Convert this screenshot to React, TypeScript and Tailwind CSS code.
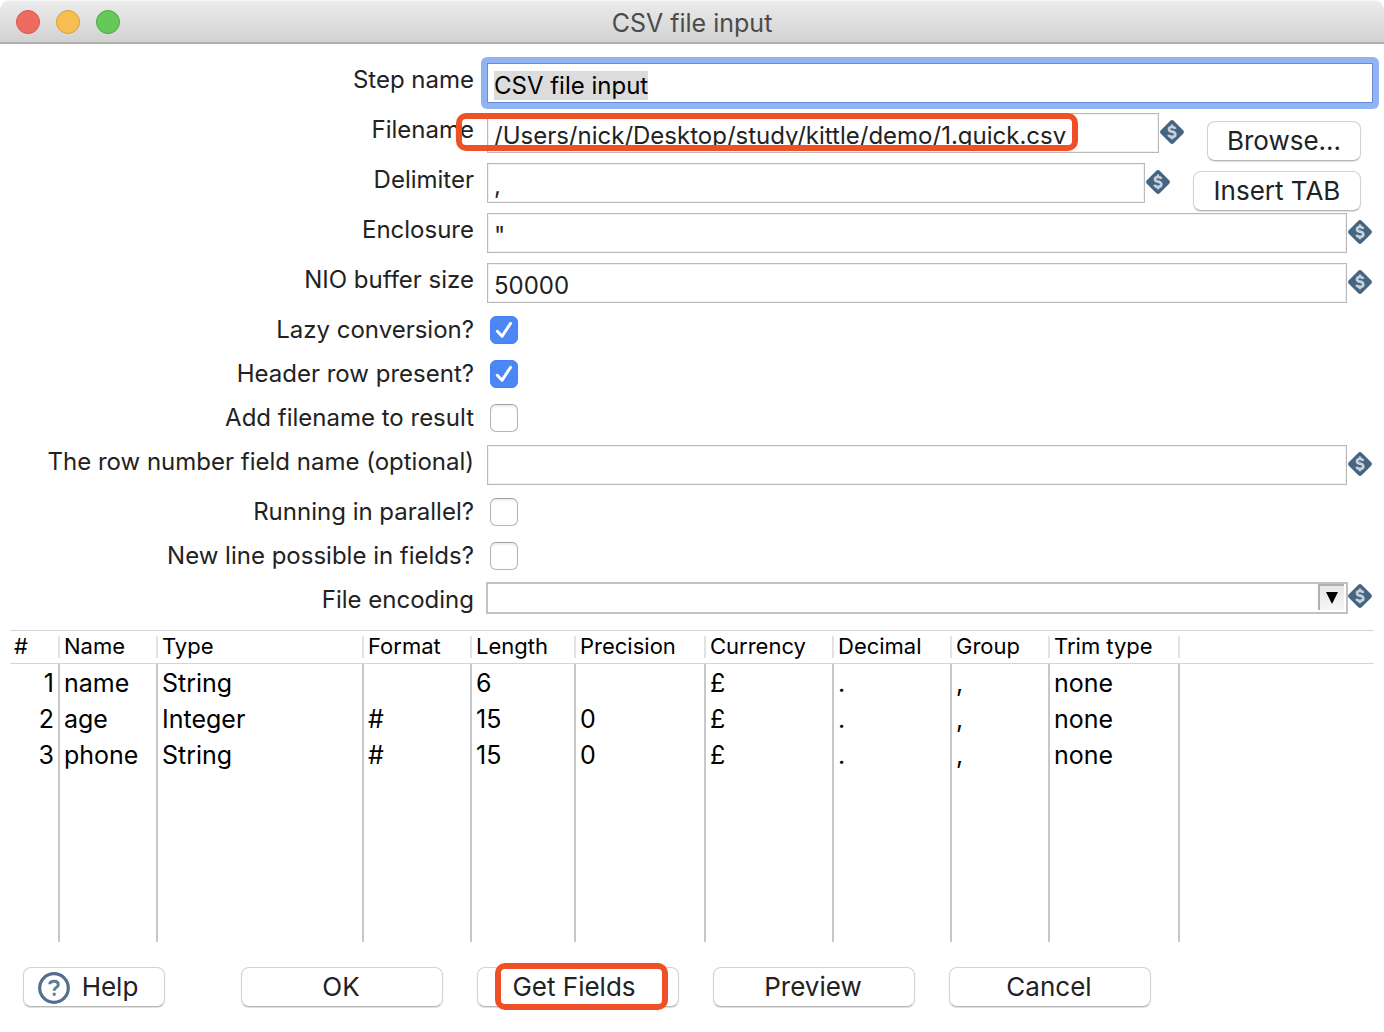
import { useEffect, useRef } from 'react';
import type { ReactNode } from 'react';

const fieldClass =
  'block h-10 min-w-0 flex-1 rounded-none border border-[#b9b9b9] bg-white px-1.5 pt-1 text-2xl text-[#222] shadow-[inset_0_0_0_1px_#f1f1f1] outline-none';

function VariableIcon() {
  return (
    <svg viewBox="0 0 24 24" className="size-6 shrink-0" aria-hidden="true">
      <path d="M10.3 0.8 Q12 -0.6 13.7 0.8 L23.2 10.3 Q24.6 12 23.2 13.7 L13.7 23.2 Q12 24.6 10.3 23.2 L0.8 13.7 Q-0.6 12 0.8 10.3 Z" fill="#456583" />
      <path d="M15.2 8.9 Q14.8 7 12 7 Q9 7 9 9.2 Q9 11.1 12 11.6 Q15.3 12.2 15.3 14.4 Q15.3 16.8 12 16.8 Q9 16.8 8.6 14.8" fill="none" stroke="#c6d1db" strokeWidth="2.7" />
      <path d="M12 4.6 V7 M12 16.8 V19.2" fill="none" stroke="#c6d1db" strokeWidth="2.4" />
    </svg>
  );
}

function Row({ label, id, tall, children }: { label: string; id: string; tall?: boolean; children: ReactNode }) {
  return (
    <div className={tall ? 'flex h-[50px] items-center' : 'flex h-11 items-center'}>
      <label htmlFor={id} className={tall ? 'w-[474px] shrink-0 pb-1.5 text-right' : 'w-[474px] shrink-0 text-right'}>
        {label}
      </label>
      {children}
    </div>
  );
}

function Check({ id, checked }: { id: string; checked?: boolean }) {
  return (
    <span className="ml-4 grid size-7">
      <input
        id={id}
        type="checkbox"
        defaultChecked={checked}
        className="peer col-start-1 row-start-1 size-7 appearance-none rounded-md border border-[#b5b5b5] border-t-[#a0a0a0] bg-white shadow-[inset_0_2px_2px_#eeeeee] checked:border-[#4583f2] checked:bg-[#4b88f6] checked:shadow-none"
      />
      <svg viewBox="0 0 28 28" className="pointer-events-none col-start-1 row-start-1 hidden size-7 peer-checked:block" aria-hidden="true">
        <path d="M7.3 16.3 L12 21.3 L20.6 8.4" fill="none" stroke="#356fd0" strokeOpacity="0.5" strokeWidth="3" strokeLinecap="round" strokeLinejoin="round" />
        <path d="M7.3 15.3 L12 20.3 L20.6 7.4" fill="none" stroke="white" strokeWidth="3" strokeLinecap="round" strokeLinejoin="round" />
      </svg>
    </span>
  );
}

const buttonClass =
  'flex h-10 shrink-0 items-center justify-center rounded-lg border border-[#d2d2d2] border-b-[#b8b8b8] bg-white text-[26px] leading-9 text-[#222] shadow-[0_1px_1px_#dddddd]';

const columns = [
  { name: '#', width: 'w-[50px]' },
  { name: 'Name', width: 'w-[98px]' },
  { name: 'Type', width: 'w-[206px]' },
  { name: 'Format', width: 'w-[108px]' },
  { name: 'Length', width: 'w-[104px]' },
  { name: 'Precision', width: 'w-[130px]' },
  { name: 'Currency', width: 'w-[128px]' },
  { name: 'Decimal', width: 'w-[118px]' },
  { name: 'Group', width: 'w-[98px]' },
  { name: 'Trim type', width: 'w-[130px]' },
];

const rows = [
  ['1', 'name', 'String', '', '6', '', '£', '.', ',', 'none'],
  ['2', 'age', 'Integer', '#', '15', '0', '£', '.', ',', 'none'],
  ['3', 'phone', 'String', '#', '15', '0', '£', '.', ',', 'none'],
];

export default function App() {
  const stepName = useRef<HTMLInputElement>(null);

  useEffect(() => {
    stepName.current?.focus();
    stepName.current?.select();
  }, []);

  return (
    <div className="min-h-screen bg-white font-['Inter',sans-serif] text-2xl text-[#222]">
      <header className="grid h-11 grid-cols-[1fr_auto_1fr] items-center rounded-t-[10px] border-b-2 border-[#b0b0b0] bg-linear-to-b from-[#ececec] to-[#d2d2d2] px-4 pt-0.5 shadow-[inset_0_1px_0_#f6f6f6]">
        <div className="flex gap-4">
          <button aria-label="Close" className="size-6 rounded-full border border-[#d9554b] bg-[#ed6b60]" />
          <button aria-label="Minimize" className="size-6 rounded-full border border-[#dba03c] bg-[#f6be50]" />
          <button aria-label="Zoom" className="size-6 rounded-full border border-[#4ba73f] bg-[#64c956]" />
        </div>
        <h1 className="pt-0.5 text-[25px] leading-9 text-[#4b4b4b]">CSV file input</h1>
      </header>

      <main>
        <form className="pt-3.5" onSubmit={(e) => e.preventDefault()}>
          <Row label="Step name" id="step" tall>
            <div className="ml-[7px] mr-[5px] flex flex-1 rounded-md bg-[#91b3f3] p-1.5">
              <input
                id="step"
                ref={stepName}
                defaultValue="CSV file input"
                className="block h-10 min-w-0 flex-1 border border-[#668dd6] bg-white px-1.5 pt-1 text-2xl text-black outline-none selection:bg-[#dcdcdc] selection:text-black"
              />
            </div>
          </Row>
          <Row label="Filename" id="filename" tall>
            <div className="relative ml-[13px] flex flex-1">
              <input id="filename" defaultValue="/Users/nick/Desktop/study/kittle/demo/1.quick.csv" className={fieldClass} />
              <span className="pointer-events-none absolute -left-[31px] top-0 h-[38px] w-[622px] rounded-[10px] border-6 border-[#ee5125]" />
            </div>
            <div className="mb-0.5 ml-px mr-[23px]"><VariableIcon /></div>
            <button type="button" className={`${buttonClass} mr-[23px] mt-4 w-[154px]`}>Browse...</button>
          </Row>
          <Row label="Delimiter" id="delimiter" tall>
            <div className="ml-[13px] flex flex-1">
              <input id="delimiter" defaultValue="," className={fieldClass} />
            </div>
            <div className="mb-0.5 ml-px mr-[23px]"><VariableIcon /></div>
            <button type="button" className={`${buttonClass} mr-[23px] mt-4 w-[168px]`}>Insert TAB</button>
          </Row>
          <Row label="Enclosure" id="enclosure" tall>
            <div className="ml-[13px] mr-px flex flex-1">
              <input id="enclosure" defaultValue={'"'} className={fieldClass} />
            </div>
            <div className="mb-0.5 mr-3"><VariableIcon /></div>
          </Row>
          <Row label="NIO buffer size" id="buffer" tall>
            <div className="ml-[13px] mr-px flex flex-1">
              <input id="buffer" defaultValue="50000" className={fieldClass} />
            </div>
            <div className="mb-0.5 mr-3"><VariableIcon /></div>
          </Row>
          <Row label="Lazy conversion?" id="lazy"><Check id="lazy" checked /></Row>
          <Row label="Header row present?" id="header"><Check id="header" checked /></Row>
          <Row label="Add filename to result" id="addname"><Check id="addname" /></Row>
          <Row label="The row number field name (optional)" id="rownum" tall>
            <div className="ml-[13px] mr-px flex flex-1">
              <input id="rownum" className={fieldClass} />
            </div>
            <div className="mb-0.5 mr-3"><VariableIcon /></div>
          </Row>
          <Row label="Running in parallel?" id="parallel"><Check id="parallel" /></Row>
          <Row label="New line possible in fields?" id="newline"><Check id="newline" /></Row>
          <Row label="File encoding" id="encoding">
            <div className="mb-1 ml-3 grid h-8 flex-1 grid-cols-[1fr_auto] border-2 border-[#c2c2c2] bg-white">
              <select id="encoding" className="col-span-2 col-start-1 row-start-1 min-w-0 appearance-none bg-transparent px-1.5 outline-none">
                <option></option>
              </select>
              <span className="pointer-events-none col-start-2 row-start-1 mr-0.5 grid h-[26px] w-[26px] place-items-center border-l-2 border-t-2 border-[#b0b0b0] bg-linear-to-b from-[#e8e8e8] to-[#f6f6f6]">
                <svg viewBox="0 0 12 12" className="size-3" aria-hidden="true"><path d="M0 0 H12 L6 12 Z" fill="black" /></svg>
              </span>
            </div>
            <div className="mb-2 mr-3"><VariableIcon /></div>
          </Row>
        </form>

        <div className="mx-2.5 mt-2">
          <table className="w-full table-fixed border-separate border-spacing-0 text-left text-black">
            <thead>
              <tr>
                {columns.map((c) => (
                  <th key={c.name} className={`${c.width} h-[34px] border-y border-[#d4d4d4] p-0 text-[22px] font-normal`}>
                    <div className="flex h-[22px] items-center border-r-2 border-[#e2e2e2] pb-0.5 pl-1 leading-none">{c.name}</div>
                  </th>
                ))}
                <th className="h-[34px] border-y border-[#d4d4d4] p-0" aria-label="Empty" />
              </tr>
            </thead>
            <tbody>
              {rows.map((r) => (
                <tr key={r[0]} className="h-9">
                  {r.map((v, i) => (
                    <td key={i} className={i === 0 ? 'border-r-2 border-[#c8c8c8] p-0 pr-1 pt-0.5 text-right text-[25px] leading-[34px]' : 'border-r-2 border-[#c8c8c8] p-0 pl-1 pt-0.5 text-[25px] leading-[34px]'}>
                      {v}
                    </td>
                  ))}
                  <td className="p-0" />
                </tr>
              ))}
              <tr className="h-[170px]">
                {columns.map((c) => (
                  <td key={c.name} className="border-r-2 border-[#c8c8c8] p-0" />
                ))}
                <td className="p-0" />
              </tr>
            </tbody>
          </table>
        </div>

        <footer className="flex px-[23px] pt-[25px]">
          <button type="button" className={`${buttonClass} mr-[76px] w-[142px] gap-3 pr-3`}>
            <svg viewBox="0 0 32 32" className="mt-0.5 size-8" aria-hidden="true">
              <circle cx="16" cy="16" r="14.3" fill="none" stroke="#50708e" strokeWidth="3.2" />
              <path d="M11.7 12.3 Q11.8 9.2 16 9.2 Q20.3 9.2 20.3 12.4 Q20.3 14.2 18.2 15.4 Q16.2 16.5 16.2 18.7 M16.2 20.8 V23.8" fill="none" stroke="#5e7c99" strokeWidth="2.9" />
            </svg>
            Help
          </button>
          <div className="flex gap-[34px]">
            <button type="button" className={`${buttonClass} w-[202px] pr-0.5`}>OK</button>
            <div className="relative">
              <button type="button" className={`${buttonClass} w-[202px] pr-2`}>Get Fields</button>
              <span className="pointer-events-none absolute -top-1 left-[18px] h-[47px] w-[173px] rounded-[10px] border-6 border-[#ee5125]" />
            </div>
            <button type="button" className={`${buttonClass} w-[202px] pr-0.5`}>Preview</button>
            <button type="button" className={`${buttonClass} w-[202px] pr-0.5`}>Cancel</button>
          </div>
        </footer>
      </main>
    </div>
  );
}
